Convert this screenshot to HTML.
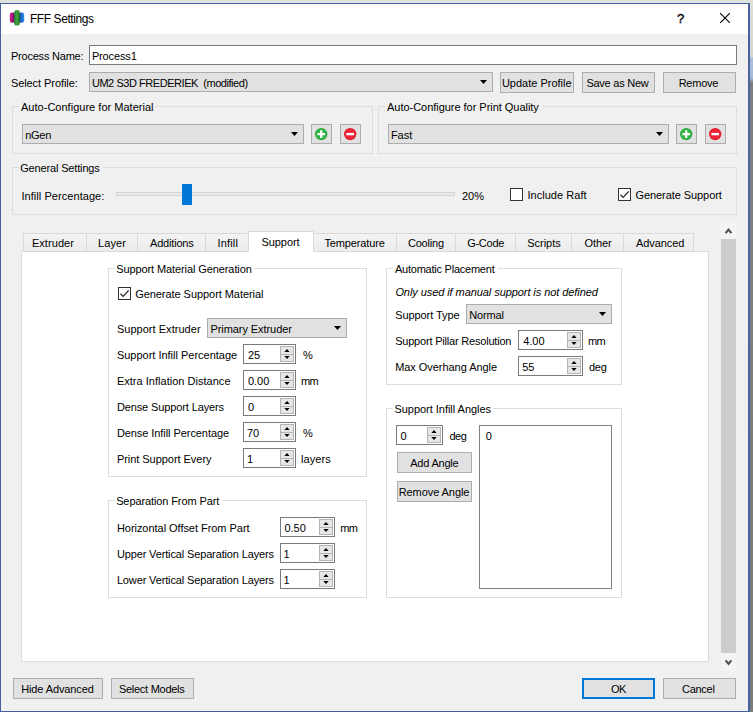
<!DOCTYPE html><html><head><meta charset="utf-8"><title>FFF Settings</title><style>

html,body{margin:0;padding:0;width:753px;height:712px;overflow:hidden;background:#f0f0f0}
#r{position:relative;width:753px;height:712px;overflow:hidden;font:11px/13px 'Liberation Sans', sans-serif;color:#000}
#r div,#r svg,#r span{position:absolute;box-sizing:border-box;display:block}
#r span{white-space:pre;font:11px/13px 'Liberation Sans', sans-serif}
#r span.tt{font:12px/15px 'Liberation Sans', sans-serif}
#r span.tq{font:13px/15px 'Liberation Sans', sans-serif;-webkit-text-stroke:0.35px #000}
#r span.ti{font:italic 11px/13px 'Liberation Sans', sans-serif}

</style></head><body><div id="r">
<div style="left:0;top:0;width:753px;height:712px;background:#dfe3dd"></div>
<div style="left:749px;top:0;width:4px;height:712px;background:linear-gradient(#dcdfda 0,#d4d6d3 57px,#a9c0dc 58px,#a4bad6 78px,#7c7f80 83px,#7b7d7b 712px)"></div>
<div style="left:0px;top:3px;width:750px;height:709px;background:#f0f0f0;border:1px solid #44609f;border-right:2px solid #4a639f;"></div>
<div style="left:1px;top:4px;width:747px;height:30px;background:#fff;"></div>
<svg style="left:9px;top:9px" width="16" height="18" viewBox="0 0 16 18">
<defs>
<linearGradient id="gm" x1="0" x2="1"><stop offset="0" stop-color="#c81c8c"/><stop offset=".35" stop-color="#b5177f"/><stop offset="1" stop-color="#4f185f"/></linearGradient>
<linearGradient id="gg" x1="0" x2="1"><stop offset="0" stop-color="#257c31"/><stop offset=".45" stop-color="#40a63c"/><stop offset="1" stop-color="#1f6e2b"/></linearGradient>
<linearGradient id="gb" x1="0" x2="1"><stop offset="0" stop-color="#17337f"/><stop offset=".6" stop-color="#2176d2"/><stop offset="1" stop-color="#2b93ea"/></linearGradient>
</defs>
<rect x="0.8" y="3.6" width="5.4" height="10.2" rx="2.2" fill="url(#gm)"/>
<rect x="9.8" y="3.6" width="5.4" height="10.2" rx="2.2" fill="url(#gb)"/>
<rect x="5.2" y="1" width="5.6" height="15.6" rx="2.7" fill="url(#gg)"/>
</svg>
<svg style="left:720px;top:13px" width="10" height="10" viewBox="0 0 10 10"><path d="M0 0L10 10M10 0L0 10" stroke="#000" stroke-width="1.1" fill="none"/></svg>
<div style="left:89px;top:45px;width:648px;height:20px;background:#fff;border:1px solid #7a7a7a;"></div>
<div style="left:89px;top:72px;width:404px;height:20px;background:#e1e1e1;border:1px solid #adadad;"></div>
<svg style="left:480px;top:80px" width="7" height="4" viewBox="0 0 7 4"><path d="M0 0H7L3.5 4Z" fill="#000"/></svg>
<div style="left:500px;top:72px;width:74px;height:21px;background:#e1e1e1;border:1px solid #adadad;"></div>
<div style="left:582px;top:72px;width:73px;height:21px;background:#e1e1e1;border:1px solid #adadad;"></div>
<div style="left:663px;top:72px;width:73px;height:21px;background:#e1e1e1;border:1px solid #adadad;"></div>
<div style="left:12px;top:106px;width:361px;height:48px;border:1px solid #dddddd;"></div>
<div style="left:19px;top:104px;width:136px;height:6px;background:#f0f0f0;"></div>
<div style="left:22px;top:124px;width:282px;height:20px;background:#e1e1e1;border:1px solid #adadad;"></div>
<svg style="left:291px;top:132px" width="7" height="4" viewBox="0 0 7 4"><path d="M0 0H7L3.5 4Z" fill="#000"/></svg>
<div style="left:311px;top:124px;width:21px;height:20px;background:#e1e1e1;border:1px solid #adadad;"></div>
<svg style="left:315px;top:127px" width="14" height="14" viewBox="0 0 14 14"><circle cx="6.2" cy="7.1" r="6.2" fill="#2fa83e"/><circle cx="6.2" cy="7.1" r="5.4" fill="#35b546"/><path d="M6.2 3.3V10.9M2.4 7.1H10" stroke="#fff" stroke-width="2.2"/></svg>
<div style="left:340px;top:124px;width:21px;height:20px;background:#e1e1e1;border:1px solid #adadad;"></div>
<svg style="left:344px;top:127px" width="14" height="14" viewBox="0 0 14 14"><circle cx="6.2" cy="7.1" r="6.2" fill="#e21b2a"/><circle cx="6.2" cy="7.1" r="5.4" fill="#ec2435"/><path d="M2.4 7.1H10" stroke="#fff" stroke-width="2.4"/></svg>
<div style="left:378px;top:106px;width:359px;height:48px;border:1px solid #dddddd;"></div>
<div style="left:385px;top:104px;width:157px;height:6px;background:#f0f0f0;"></div>
<div style="left:388px;top:124px;width:281px;height:20px;background:#e1e1e1;border:1px solid #adadad;"></div>
<svg style="left:656px;top:132px" width="7" height="4" viewBox="0 0 7 4"><path d="M0 0H7L3.5 4Z" fill="#000"/></svg>
<div style="left:676px;top:124px;width:21px;height:20px;background:#e1e1e1;border:1px solid #adadad;"></div>
<svg style="left:680px;top:127px" width="14" height="14" viewBox="0 0 14 14"><circle cx="6.2" cy="7.1" r="6.2" fill="#2fa83e"/><circle cx="6.2" cy="7.1" r="5.4" fill="#35b546"/><path d="M6.2 3.3V10.9M2.4 7.1H10" stroke="#fff" stroke-width="2.2"/></svg>
<div style="left:705px;top:124px;width:21px;height:20px;background:#e1e1e1;border:1px solid #adadad;"></div>
<svg style="left:709px;top:127px" width="14" height="14" viewBox="0 0 14 14"><circle cx="6.2" cy="7.1" r="6.2" fill="#e21b2a"/><circle cx="6.2" cy="7.1" r="5.4" fill="#ec2435"/><path d="M2.4 7.1H10" stroke="#fff" stroke-width="2.4"/></svg>
<div style="left:12px;top:167px;width:725px;height:48px;border:1px solid #dddddd;"></div>
<div style="left:19px;top:165px;width:84px;height:6px;background:#f0f0f0;"></div>
<div style="left:116px;top:192px;width:339px;height:4px;background:#e7eaea;border:1px solid #d6d6d6;"></div>
<div style="left:182px;top:184px;width:10px;height:21px;background:#0078d7;"></div>
<div style="left:510px;top:188px;width:13px;height:13px;background:#fff;border:1px solid #333;"></div>
<div style="left:618px;top:188px;width:13px;height:13px;background:#fff;border:1px solid #333;"></div>
<svg style="left:618px;top:188px" width="13" height="13" viewBox="0 0 13 13"><path d="M2.5 6.8L5.1 9.4L10.7 3.4" fill="none" stroke="#2a2a2a" stroke-width="1.35"/></svg>
<div style="left:721px;top:222px;width:15px;height:449px;background:#f4f4f4;"></div>
<div style="left:721px;top:239px;width:15px;height:414px;background:#cdcdcd;"></div>
<svg style="left:724px;top:226px" width="9" height="9" viewBox="0 0 9 9"><path d="M1.6 7.1L4.5 3.6L7.4 7.1" fill="none" stroke="#505050" stroke-width="2.1"/></svg>
<svg style="left:724px;top:658px" width="9" height="9" viewBox="0 0 9 9"><path d="M1.6 2.4L4.5 5.9L7.4 2.4" fill="none" stroke="#505050" stroke-width="2.1"/></svg>
<div style="left:21px;top:251px;width:688px;height:411px;background:#fff;border:1px solid #dcdcdc;"></div>
<div style="left:23px;top:233px;width:64px;height:19px;background:linear-gradient(#f3f3f3,#ececec);border:1px solid #d9d9d9;"></div>
<div style="left:86px;top:233px;width:52px;height:19px;background:linear-gradient(#f3f3f3,#ececec);border:1px solid #d9d9d9;"></div>
<div style="left:137px;top:233px;width:69px;height:19px;background:linear-gradient(#f3f3f3,#ececec);border:1px solid #d9d9d9;"></div>
<div style="left:205px;top:233px;width:44px;height:19px;background:linear-gradient(#f3f3f3,#ececec);border:1px solid #d9d9d9;"></div>
<div style="left:313px;top:233px;width:84px;height:19px;background:linear-gradient(#f3f3f3,#ececec);border:1px solid #d9d9d9;"></div>
<div style="left:396px;top:233px;width:60px;height:19px;background:linear-gradient(#f3f3f3,#ececec);border:1px solid #d9d9d9;"></div>
<div style="left:455px;top:233px;width:61px;height:19px;background:linear-gradient(#f3f3f3,#ececec);border:1px solid #d9d9d9;"></div>
<div style="left:515px;top:233px;width:57px;height:19px;background:linear-gradient(#f3f3f3,#ececec);border:1px solid #d9d9d9;"></div>
<div style="left:571px;top:233px;width:53px;height:19px;background:linear-gradient(#f3f3f3,#ececec);border:1px solid #d9d9d9;"></div>
<div style="left:623px;top:233px;width:71px;height:19px;background:linear-gradient(#f3f3f3,#ececec);border:1px solid #d9d9d9;"></div>
<div style="left:248px;top:231px;width:66px;height:21px;background:#fff;border:1px solid #d9d9d9;border-bottom:none;"></div>
<div style="left:108px;top:268px;width:259px;height:209px;border:1px solid #dddddd;"></div>
<div style="left:115px;top:266px;width:139px;height:6px;background:#fff;"></div>
<div style="left:118px;top:287px;width:13px;height:13px;background:#fff;border:1px solid #333;"></div>
<svg style="left:118px;top:287px" width="13" height="13" viewBox="0 0 13 13"><path d="M2.5 6.8L5.1 9.4L10.7 3.4" fill="none" stroke="#2a2a2a" stroke-width="1.35"/></svg>
<div style="left:207px;top:318px;width:140px;height:20px;background:#e1e1e1;border:1px solid #adadad;"></div>
<svg style="left:334px;top:326px" width="7" height="4" viewBox="0 0 7 4"><path d="M0 0H7L3.5 4Z" fill="#000"/></svg>
<div style="left:243px;top:344px;width:53px;height:20px;background:#fff;border:1px solid #7a7a7a;"></div>
<div style="left:280px;top:346px;width:14px;height:16px;background:#e6e6e6;border:1px solid #b4b4b4;"></div>
<div style="left:281px;top:354px;width:12px;height:1px;background:#b4b4b4;"></div>
<svg style="left:284px;top:349px" width="6" height="3" viewBox="0 0 6 3"><path d="M0.4 3L3 0L5.6 3Z" fill="#000"/></svg>
<svg style="left:284px;top:356px" width="6" height="3" viewBox="0 0 6 3"><path d="M0.4 0L3 3L5.6 0Z" fill="#000"/></svg>
<div style="left:243px;top:370px;width:53px;height:20px;background:#fff;border:1px solid #7a7a7a;"></div>
<div style="left:280px;top:372px;width:14px;height:16px;background:#e6e6e6;border:1px solid #b4b4b4;"></div>
<div style="left:281px;top:380px;width:12px;height:1px;background:#b4b4b4;"></div>
<svg style="left:284px;top:375px" width="6" height="3" viewBox="0 0 6 3"><path d="M0.4 3L3 0L5.6 3Z" fill="#000"/></svg>
<svg style="left:284px;top:382px" width="6" height="3" viewBox="0 0 6 3"><path d="M0.4 0L3 3L5.6 0Z" fill="#000"/></svg>
<div style="left:243px;top:396px;width:53px;height:20px;background:#fff;border:1px solid #7a7a7a;"></div>
<div style="left:280px;top:398px;width:14px;height:16px;background:#e6e6e6;border:1px solid #b4b4b4;"></div>
<div style="left:281px;top:406px;width:12px;height:1px;background:#b4b4b4;"></div>
<svg style="left:284px;top:401px" width="6" height="3" viewBox="0 0 6 3"><path d="M0.4 3L3 0L5.6 3Z" fill="#000"/></svg>
<svg style="left:284px;top:408px" width="6" height="3" viewBox="0 0 6 3"><path d="M0.4 0L3 3L5.6 0Z" fill="#000"/></svg>
<div style="left:243px;top:422px;width:53px;height:20px;background:#fff;border:1px solid #7a7a7a;"></div>
<div style="left:280px;top:424px;width:14px;height:16px;background:#e6e6e6;border:1px solid #b4b4b4;"></div>
<div style="left:281px;top:432px;width:12px;height:1px;background:#b4b4b4;"></div>
<svg style="left:284px;top:427px" width="6" height="3" viewBox="0 0 6 3"><path d="M0.4 3L3 0L5.6 3Z" fill="#000"/></svg>
<svg style="left:284px;top:434px" width="6" height="3" viewBox="0 0 6 3"><path d="M0.4 0L3 3L5.6 0Z" fill="#000"/></svg>
<div style="left:243px;top:448px;width:53px;height:20px;background:#fff;border:1px solid #7a7a7a;"></div>
<div style="left:280px;top:450px;width:14px;height:16px;background:#e6e6e6;border:1px solid #b4b4b4;"></div>
<div style="left:281px;top:458px;width:12px;height:1px;background:#b4b4b4;"></div>
<svg style="left:284px;top:453px" width="6" height="3" viewBox="0 0 6 3"><path d="M0.4 3L3 0L5.6 3Z" fill="#000"/></svg>
<svg style="left:284px;top:460px" width="6" height="3" viewBox="0 0 6 3"><path d="M0.4 0L3 3L5.6 0Z" fill="#000"/></svg>
<div style="left:108px;top:500px;width:259px;height:98px;border:1px solid #dddddd;"></div>
<div style="left:115px;top:498px;width:107px;height:6px;background:#fff;"></div>
<div style="left:280px;top:517px;width:55px;height:20px;background:#fff;border:1px solid #7a7a7a;"></div>
<div style="left:319px;top:519px;width:14px;height:16px;background:#e6e6e6;border:1px solid #b4b4b4;"></div>
<div style="left:320px;top:527px;width:12px;height:1px;background:#b4b4b4;"></div>
<svg style="left:323px;top:522px" width="6" height="3" viewBox="0 0 6 3"><path d="M0.4 3L3 0L5.6 3Z" fill="#000"/></svg>
<svg style="left:323px;top:529px" width="6" height="3" viewBox="0 0 6 3"><path d="M0.4 0L3 3L5.6 0Z" fill="#000"/></svg>
<div style="left:280px;top:543px;width:55px;height:20px;background:#fff;border:1px solid #7a7a7a;"></div>
<div style="left:319px;top:545px;width:14px;height:16px;background:#e6e6e6;border:1px solid #b4b4b4;"></div>
<div style="left:320px;top:553px;width:12px;height:1px;background:#b4b4b4;"></div>
<svg style="left:323px;top:548px" width="6" height="3" viewBox="0 0 6 3"><path d="M0.4 3L3 0L5.6 3Z" fill="#000"/></svg>
<svg style="left:323px;top:555px" width="6" height="3" viewBox="0 0 6 3"><path d="M0.4 0L3 3L5.6 0Z" fill="#000"/></svg>
<div style="left:280px;top:569px;width:55px;height:20px;background:#fff;border:1px solid #7a7a7a;"></div>
<div style="left:319px;top:571px;width:14px;height:16px;background:#e6e6e6;border:1px solid #b4b4b4;"></div>
<div style="left:320px;top:579px;width:12px;height:1px;background:#b4b4b4;"></div>
<svg style="left:323px;top:574px" width="6" height="3" viewBox="0 0 6 3"><path d="M0.4 3L3 0L5.6 3Z" fill="#000"/></svg>
<svg style="left:323px;top:581px" width="6" height="3" viewBox="0 0 6 3"><path d="M0.4 0L3 3L5.6 0Z" fill="#000"/></svg>
<div style="left:386px;top:268px;width:236px;height:117px;border:1px solid #dddddd;"></div>
<div style="left:393px;top:266px;width:105px;height:6px;background:#fff;"></div>
<div style="left:466px;top:304px;width:146px;height:20px;background:#e1e1e1;border:1px solid #adadad;"></div>
<svg style="left:599px;top:312px" width="7" height="4" viewBox="0 0 7 4"><path d="M0 0H7L3.5 4Z" fill="#000"/></svg>
<div style="left:518px;top:330px;width:65px;height:20px;background:#fff;border:1px solid #7a7a7a;"></div>
<div style="left:567px;top:332px;width:14px;height:16px;background:#e6e6e6;border:1px solid #b4b4b4;"></div>
<div style="left:568px;top:340px;width:12px;height:1px;background:#b4b4b4;"></div>
<svg style="left:571px;top:335px" width="6" height="3" viewBox="0 0 6 3"><path d="M0.4 3L3 0L5.6 3Z" fill="#000"/></svg>
<svg style="left:571px;top:342px" width="6" height="3" viewBox="0 0 6 3"><path d="M0.4 0L3 3L5.6 0Z" fill="#000"/></svg>
<div style="left:518px;top:356px;width:65px;height:20px;background:#fff;border:1px solid #7a7a7a;"></div>
<div style="left:567px;top:358px;width:14px;height:16px;background:#e6e6e6;border:1px solid #b4b4b4;"></div>
<div style="left:568px;top:366px;width:12px;height:1px;background:#b4b4b4;"></div>
<svg style="left:571px;top:361px" width="6" height="3" viewBox="0 0 6 3"><path d="M0.4 3L3 0L5.6 3Z" fill="#000"/></svg>
<svg style="left:571px;top:368px" width="6" height="3" viewBox="0 0 6 3"><path d="M0.4 0L3 3L5.6 0Z" fill="#000"/></svg>
<div style="left:386px;top:408px;width:236px;height:190px;border:1px solid #dddddd;"></div>
<div style="left:393px;top:406px;width:100px;height:6px;background:#fff;"></div>
<div style="left:396px;top:425px;width:47px;height:20px;background:#fff;border:1px solid #7a7a7a;"></div>
<div style="left:427px;top:427px;width:14px;height:16px;background:#e6e6e6;border:1px solid #b4b4b4;"></div>
<div style="left:428px;top:435px;width:12px;height:1px;background:#b4b4b4;"></div>
<svg style="left:431px;top:430px" width="6" height="3" viewBox="0 0 6 3"><path d="M0.4 3L3 0L5.6 3Z" fill="#000"/></svg>
<svg style="left:431px;top:437px" width="6" height="3" viewBox="0 0 6 3"><path d="M0.4 0L3 3L5.6 0Z" fill="#000"/></svg>
<div style="left:479px;top:425px;width:133px;height:164px;background:#fff;border:1px solid #828282;"></div>
<div style="left:397px;top:452px;width:75px;height:21px;background:#e1e1e1;border:1px solid #adadad;"></div>
<div style="left:397px;top:481px;width:75px;height:21px;background:#e1e1e1;border:1px solid #adadad;"></div>
<div style="left:13px;top:678px;width:90px;height:21px;background:#e1e1e1;border:1px solid #adadad;"></div>
<div style="left:111px;top:678px;width:83px;height:21px;background:#e1e1e1;border:1px solid #adadad;"></div>
<div style="left:582px;top:678px;width:73px;height:21px;background:#e1e1e1;border:2px solid #0078d7;"></div>
<div style="left:663px;top:678px;width:73px;height:21px;background:#e1e1e1;border:1px solid #adadad;"></div>
<span class="tt" style="left:29.90px;top:12px;letter-spacing:-0.409px;">FFF Settings</span>
<span class="tq" style="left:676.90px;top:10.5px;">?</span>
<span style="left:10.90px;top:50px;letter-spacing:-0.208px;">Process Name:</span>
<span style="left:91.90px;top:50px;letter-spacing:-0.143px;">Process1</span>
<span style="left:10.90px;top:77px;letter-spacing:-0.071px;">Select Profile:</span>
<span style="left:91.90px;top:77px;letter-spacing:-0.446px;">UM2 S3D FREDERIEK  (modified)</span>
<span style="left:501.90px;top:77px;">Update Profile</span>
<span style="left:586.40px;top:77px;letter-spacing:-0.250px;">Save as New</span>
<span style="left:678.70px;top:77px;letter-spacing:-0.260px;">Remove</span>
<span style="left:21.00px;top:101px;letter-spacing:0.019px;">Auto-Configure for Material</span>
<span style="left:25.15px;top:129px;letter-spacing:-0.250px;">nGen</span>
<span style="left:387.00px;top:101px;letter-spacing:-0.032px;">Auto-Configure for Print Quality</span>
<span style="left:390.90px;top:129px;">Fast</span>
<span style="left:20.15px;top:162px;letter-spacing:-0.150px;">General Settings</span>
<span style="left:21.40px;top:190px;letter-spacing:0.059px;">Infill Percentage:</span>
<span style="left:461.90px;top:190px;">20%</span>
<span style="left:527.40px;top:189px;letter-spacing:0.045px;">Include Raft</span>
<span style="left:635.40px;top:189px;letter-spacing:-0.067px;">Generate Support</span>
<span style="left:31.90px;top:237px;letter-spacing:0.071px;">Extruder</span>
<span style="left:97.90px;top:237px;letter-spacing:0.125px;">Layer</span>
<span style="left:150.00px;top:237px;letter-spacing:-0.188px;">Additions</span>
<span style="left:217.40px;top:237px;letter-spacing:0.200px;">Infill</span>
<span style="left:324.40px;top:237px;letter-spacing:-0.125px;">Temperature</span>
<span style="left:407.90px;top:237px;letter-spacing:-0.167px;">Cooling</span>
<span style="left:467.15px;top:237px;letter-spacing:-0.250px;">G-Code</span>
<span style="left:527.15px;top:237px;">Scripts</span>
<span style="left:584.40px;top:237px;letter-spacing:-0.062px;">Other</span>
<span style="left:636.00px;top:237px;letter-spacing:-0.071px;">Advanced</span>
<span style="left:261.40px;top:236px;letter-spacing:-0.042px;">Support</span>
<span style="left:116.15px;top:263px;letter-spacing:-0.096px;">Support Material Generation</span>
<span style="left:135.15px;top:288px;letter-spacing:-0.052px;">Generate Support Material</span>
<span style="left:116.90px;top:323px;letter-spacing:0.033px;">Support Extruder</span>
<span style="left:210.40px;top:323px;letter-spacing:-0.067px;">Primary Extruder</span>
<span style="left:116.90px;top:349px;letter-spacing:-0.010px;">Support Infill Percentage</span>
<span style="left:247.90px;top:349px;">25</span>
<span style="left:303.10px;top:349px;">%</span>
<span style="left:116.90px;top:375px;letter-spacing:0.022px;">Extra Inflation Distance</span>
<span style="left:247.90px;top:375px;">0.00</span>
<span style="left:301.00px;top:375px;letter-spacing:-0.600px;">mm</span>
<span style="left:116.90px;top:401px;letter-spacing:-0.118px;">Dense Support Layers</span>
<span style="left:247.90px;top:401px;">0</span>
<span style="left:116.90px;top:427px;letter-spacing:-0.068px;">Dense Infill Percentage</span>
<span style="left:246.90px;top:427px;">70</span>
<span style="left:303.10px;top:427px;">%</span>
<span style="left:116.90px;top:453px;letter-spacing:-0.042px;">Print Support Every</span>
<span style="left:246.90px;top:453px;">1</span>
<span style="left:301.00px;top:453px;letter-spacing:0.080px;">layers</span>
<span style="left:116.15px;top:495px;letter-spacing:-0.105px;">Separation From Part</span>
<span style="left:116.90px;top:522px;letter-spacing:-0.038px;">Horizontal Offset From Part</span>
<span style="left:284.40px;top:522px;">0.50</span>
<span style="left:340.20px;top:522px;letter-spacing:-0.600px;">mm</span>
<span style="left:116.90px;top:548px;letter-spacing:-0.137px;">Upper Vertical Separation Layers</span>
<span style="left:283.40px;top:548px;">1</span>
<span style="left:116.90px;top:574px;letter-spacing:-0.137px;">Lower Vertical Separation Layers</span>
<span style="left:283.40px;top:574px;">1</span>
<span style="left:395.00px;top:263px;letter-spacing:-0.236px;">Automatic Placement</span>
<span class="ti" style="left:395.40px;top:286px;letter-spacing:-0.073px;">Only used if manual support is not defined</span>
<span style="left:395.15px;top:309px;letter-spacing:-0.068px;">Support Type</span>
<span style="left:469.15px;top:309px;letter-spacing:-0.150px;">Normal</span>
<span style="left:395.15px;top:335px;letter-spacing:-0.198px;">Support Pillar Resolution</span>
<span style="left:523.15px;top:335px;">4.00</span>
<span style="left:588.00px;top:335px;letter-spacing:-0.600px;">mm</span>
<span style="left:395.15px;top:361px;letter-spacing:-0.044px;">Max Overhang Angle</span>
<span style="left:522.15px;top:361px;">55</span>
<span style="left:589.00px;top:361px;letter-spacing:-0.300px;">deg</span>
<span style="left:394.40px;top:403px;letter-spacing:-0.025px;">Support Infill Angles</span>
<span style="left:400.40px;top:430px;">0</span>
<span style="left:449.40px;top:430px;letter-spacing:-0.500px;">deg</span>
<span style="left:485.65px;top:430px;">0</span>
<span style="left:410.25px;top:457px;letter-spacing:-0.219px;">Add Angle</span>
<span style="left:398.65px;top:486px;letter-spacing:-0.068px;">Remove Angle</span>
<span style="left:21.20px;top:683px;letter-spacing:-0.108px;">Hide Advanced</span>
<span style="left:118.90px;top:683px;letter-spacing:-0.267px;">Select Models</span>
<span style="left:611.00px;top:683px;letter-spacing:-0.600px;">OK</span>
<span style="left:682.00px;top:683px;letter-spacing:-0.280px;">Cancel</span>
</div></body></html>
